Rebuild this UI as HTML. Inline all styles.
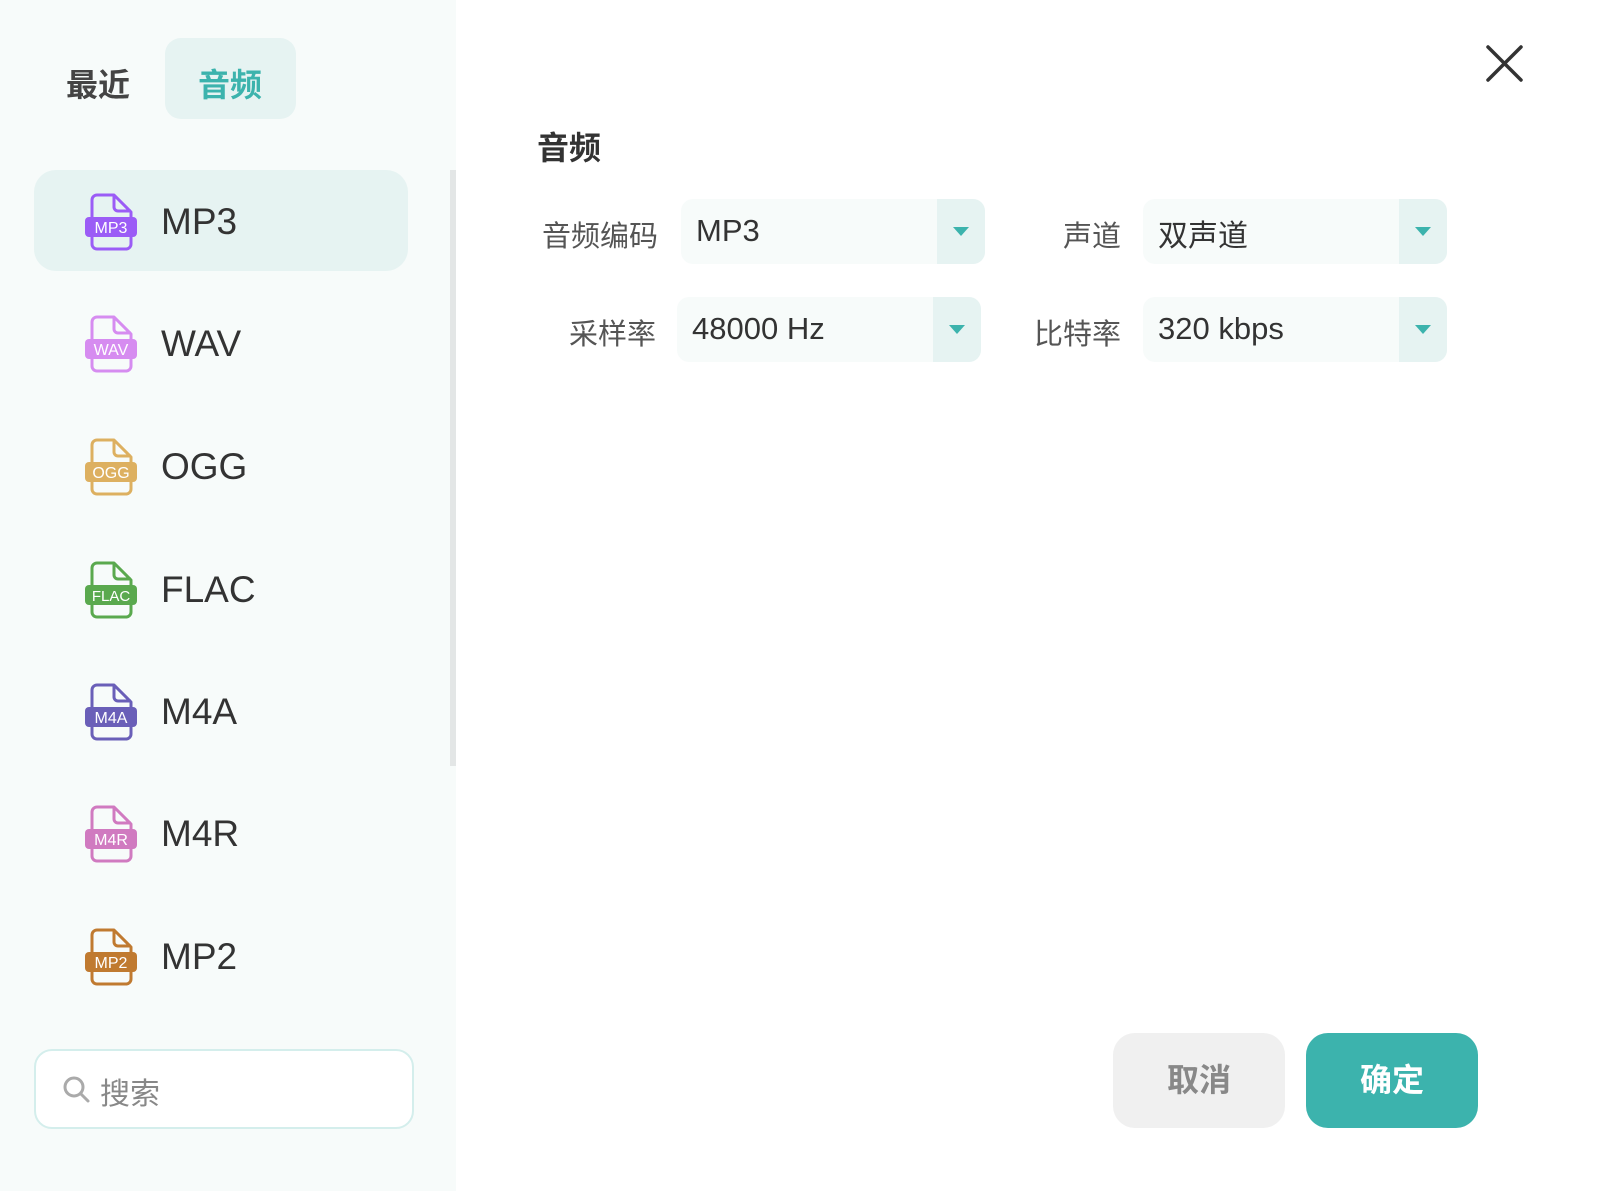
<!DOCTYPE html>
<html><head><meta charset="utf-8"><style>
*{margin:0;padding:0;box-sizing:border-box}
body{width:1597px;height:1191px;background:#fff;position:relative;overflow:hidden;font-family:"Liberation Sans","Noto Sans CJK SC",sans-serif;color:#333}
.left{position:absolute;left:0;top:0;width:456px;height:1191px;background:#f7fbfa}
.abs{position:absolute}
.tab{font-size:32px;font-weight:bold}
.row{position:absolute;left:34px;width:374px;height:101px;border-radius:22px}
.row svg{position:absolute;left:50px;top:23px}
.row span{position:absolute;left:127px;top:31px;font-size:37px;color:#333;font-family:"Liberation Sans",sans-serif}
.lbl{position:absolute;font-size:29px;color:#555;text-align:right}
.dd{position:absolute;width:304px;height:65px;background:#f7fbfa;border-radius:12px;overflow:hidden}
.dd span{position:absolute;left:15px;top:14px;font-size:31px;color:#333;font-family:"Liberation Sans","Noto Sans CJK SC",sans-serif}
.dd i{position:absolute;right:0;top:0;width:48px;height:65px;background:#e6f3f2}
.dd i:after{content:"";position:absolute;left:16px;top:28px;border-left:8px solid transparent;border-right:8px solid transparent;border-top:9px solid #3cb3ad}
.btn{position:absolute;top:1033px;width:172px;height:95px;border-radius:22px;font-size:32px;font-weight:bold;text-align:center;line-height:95px}
svg text{font-family:"Liberation Sans",sans-serif}
</style></head><body>
<div class="left"></div>
<div class="abs tab" style="left:66px;top:60px;color:#444">最近</div>
<div class="abs" style="left:165px;top:38px;width:131px;height:81px;background:#e6f3f2;border-radius:16px"></div>
<div class="abs tab" style="left:198px;top:60px;color:#3cb3ad">音频</div>
<div class="abs" style="left:450px;top:170px;width:6px;height:596px;background:#e3e6e6"></div>

<div class="row" style="top:170px;background:#e6f3f2"><svg width="54" height="58" viewBox="0 0 54 58"><g fill="none" stroke="#9b5cf6" stroke-width="3" stroke-linejoin="round"><path d="M8 24V7a5 5 0 0 1 5-5H30L47 19V24M8 44V51a5 5 0 0 0 5 5H42a5 5 0 0 0 5-5V44M30 2V14a4 4 0 0 0 4 4H47"/></g><rect x="1" y="24" width="52" height="20" rx="4" fill="#9b5cf6"/><text x="27" y="40" font-size="16" fill="#fff" text-anchor="middle">MP3</text></svg><span>MP3</span></div>
<div class="row" style="top:292px"><svg width="54" height="58" viewBox="0 0 54 58"><g fill="none" stroke="#d68cf0" stroke-width="3" stroke-linejoin="round"><path d="M8 24V7a5 5 0 0 1 5-5H30L47 19V24M8 44V51a5 5 0 0 0 5 5H42a5 5 0 0 0 5-5V44M30 2V14a4 4 0 0 0 4 4H47"/></g><rect x="1" y="24" width="52" height="20" rx="4" fill="#d68cf0"/><text x="27" y="40" font-size="16" fill="#fff" text-anchor="middle">WAV</text></svg><span>WAV</span></div>
<div class="row" style="top:415px"><svg width="54" height="58" viewBox="0 0 54 58"><g fill="none" stroke="#ddb060" stroke-width="3" stroke-linejoin="round"><path d="M8 24V7a5 5 0 0 1 5-5H30L47 19V24M8 44V51a5 5 0 0 0 5 5H42a5 5 0 0 0 5-5V44M30 2V14a4 4 0 0 0 4 4H47"/></g><rect x="1" y="24" width="52" height="20" rx="4" fill="#ddb060"/><text x="27" y="40" font-size="16" fill="#fff" text-anchor="middle">OGG</text></svg><span>OGG</span></div>
<div class="row" style="top:538px"><svg width="54" height="58" viewBox="0 0 54 58"><g fill="none" stroke="#5aa94e" stroke-width="3" stroke-linejoin="round"><path d="M8 24V7a5 5 0 0 1 5-5H30L47 19V24M8 44V51a5 5 0 0 0 5 5H42a5 5 0 0 0 5-5V44M30 2V14a4 4 0 0 0 4 4H47"/></g><rect x="1" y="24" width="52" height="20" rx="4" fill="#5aa94e"/><text x="27" y="40" font-size="15" fill="#fff" text-anchor="middle">FLAC</text></svg><span>FLAC</span></div>
<div class="row" style="top:660px"><svg width="54" height="58" viewBox="0 0 54 58"><g fill="none" stroke="#6a5fb8" stroke-width="3" stroke-linejoin="round"><path d="M8 24V7a5 5 0 0 1 5-5H30L47 19V24M8 44V51a5 5 0 0 0 5 5H42a5 5 0 0 0 5-5V44M30 2V14a4 4 0 0 0 4 4H47"/></g><rect x="1" y="24" width="52" height="20" rx="4" fill="#6a5fb8"/><text x="27" y="40" font-size="16" fill="#fff" text-anchor="middle">M4A</text></svg><span>M4A</span></div>
<div class="row" style="top:782px"><svg width="54" height="58" viewBox="0 0 54 58"><g fill="none" stroke="#d07ac0" stroke-width="3" stroke-linejoin="round"><path d="M8 24V7a5 5 0 0 1 5-5H30L47 19V24M8 44V51a5 5 0 0 0 5 5H42a5 5 0 0 0 5-5V44M30 2V14a4 4 0 0 0 4 4H47"/></g><rect x="1" y="24" width="52" height="20" rx="4" fill="#d07ac0"/><text x="27" y="40" font-size="16" fill="#fff" text-anchor="middle">M4R</text></svg><span>M4R</span></div>
<div class="row" style="top:905px"><svg width="54" height="58" viewBox="0 0 54 58"><g fill="none" stroke="#c07a30" stroke-width="3" stroke-linejoin="round"><path d="M8 24V7a5 5 0 0 1 5-5H30L47 19V24M8 44V51a5 5 0 0 0 5 5H42a5 5 0 0 0 5-5V44M30 2V14a4 4 0 0 0 4 4H47"/></g><rect x="1" y="24" width="52" height="20" rx="4" fill="#c07a30"/><text x="27" y="40" font-size="16" fill="#fff" text-anchor="middle">MP2</text></svg><span>MP2</span></div>

<div class="abs" style="left:34px;top:1049px;width:380px;height:80px;background:#fff;border:2px solid #d4eeec;border-radius:18px">
<svg class="abs" style="left:26px;top:24px" width="30" height="30" viewBox="0 0 30 30"><circle cx="12" cy="12" r="9" fill="none" stroke="#aaa" stroke-width="3"/><path d="M19 19L26 26" stroke="#aaa" stroke-width="3" stroke-linecap="round"/></svg>
<div class="abs" style="left:64px;top:18px;font-size:30px;color:#888">搜索</div></div>

<svg class="abs" style="left:1484px;top:44px" width="40" height="40"><path d="M4 3L37 36M37 3L4 36" stroke="#333" stroke-width="3.5" stroke-linecap="round"/></svg>
<div class="abs" style="left:537px;top:123px;font-size:32px;font-weight:bold;color:#333">音频</div>

<div class="lbl" style="left:500px;width:158px;top:213px">音频编码</div>
<div class="dd" style="left:681px;top:199px"><span>MP3</span><i></i></div>
<div class="lbl" style="left:1000px;width:121px;top:213px">声道</div>
<div class="dd" style="left:1143px;top:199px"><span style="top:12px;font-size:30px">双声道</span><i></i></div>
<div class="lbl" style="left:500px;width:156px;top:311px">采样率</div>
<div class="dd" style="left:677px;top:297px"><span>48000 Hz</span><i></i></div>
<div class="lbl" style="left:1000px;width:121px;top:311px">比特率</div>
<div class="dd" style="left:1143px;top:297px"><span>320 kbps</span><i></i></div>

<div class="btn" style="left:1113px;background:#f0f0f0;color:#888">取消</div>
<div class="btn" style="left:1306px;background:#3cb3ad;color:#fff">确定</div>
</body></html>
